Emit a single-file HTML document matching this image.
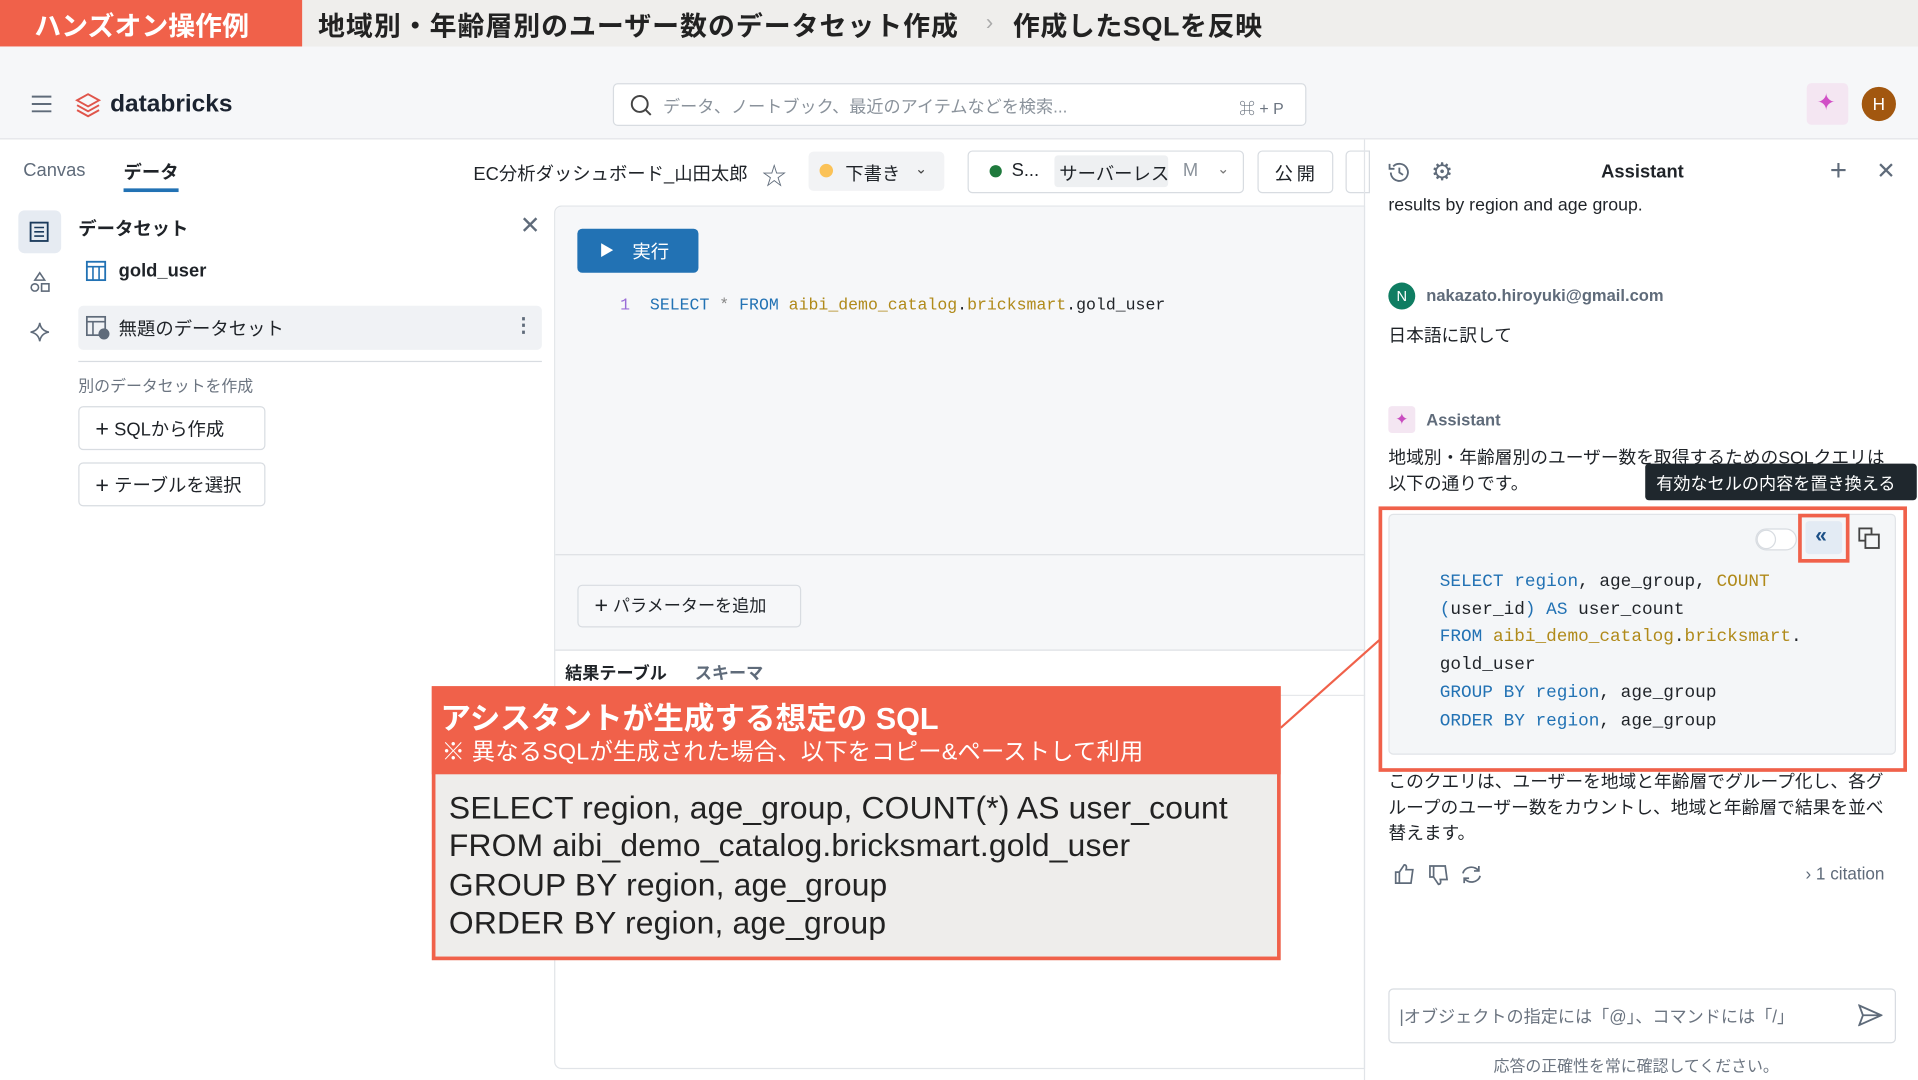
<!DOCTYPE html>
<html><head><meta charset="utf-8">
<style>
*{box-sizing:border-box;margin:0;padding:0}
html,body{width:1918px;height:1080px;overflow:hidden;background:#fff}
#w{position:absolute;left:0;top:0;width:1568px;height:883px;transform:scale(1.22321);transform-origin:0 0;font-family:"Liberation Sans","Noto Sans CJK JP",sans-serif;color:#1f2328;background:#fff}
.a{position:absolute;white-space:nowrap}
.mono{font-family:"Liberation Mono","DejaVu Sans Mono",monospace}
.kw{color:#2272b4}.ol{color:#b08a1a}
</style></head><body><div id="w">
<!-- banner -->
<div class="a" style="left:0;top:0;width:1568px;height:38px;background:#efeeec"></div>
<div class="a" style="left:0;top:0;width:247px;height:38px;background:#f0614a"></div>
<div class="a" style="left:28px;top:4px;font-size:22px;font-weight:bold;color:#fff">ハンズオン操作例</div>
<div class="a" style="left:260px;top:4px;font-size:22px;font-weight:bold;color:#222;letter-spacing:0.8px">地域別・年齢層別のユーザー数のデータセット作成</div>
<div class="a" style="left:806px;top:8px;font-size:18px;color:#aaa">›</div>
<div class="a" style="left:828px;top:4px;font-size:22px;font-weight:bold;color:#222;letter-spacing:0.5px">作成したSQLを反映</div>
<!-- header -->
<div class="a" style="left:0;top:38px;width:1568px;height:76px;background:#f6f7f9;border-bottom:1px solid #e3e5e8"></div>
<svg class="a" style="left:25px;top:78px" width="18" height="14"><path d="M1 1h16M1 7h16M1 13h16" stroke="#5f6b7a" stroke-width="1.6"/></svg>
<svg class="a" style="left:61px;top:75px" width="22" height="22" viewBox="0 0 22 22"><path d="M11 2l9 5-9 5-9-5z" fill="none" stroke="#e0554b" stroke-width="1.6"/><path d="M2 11l9 5 9-5M2 15l9 5 9-5" fill="none" stroke="#e0554b" stroke-width="1.6"/></svg>
<div class="a" style="left:90px;top:74px;font-size:20px;font-weight:bold;color:#1b2330">databricks</div>
<div class="a" style="left:501px;top:68px;width:567px;height:35px;background:#fff;border:1px solid #d8dce1;border-radius:4px"></div>
<svg class="a" style="left:515px;top:77px" width="18" height="18"><circle cx="8" cy="8" r="6.5" fill="none" stroke="#444" stroke-width="1.6"/><path d="M13 13l4 4" stroke="#444" stroke-width="1.6"/></svg>
<div class="a" style="left:542px;top:77px;font-size:14px;color:#8a929b">データ、ノートブック、最近のアイテムなどを検索...</div>
<div class="a" style="left:1013px;top:78px;font-size:13px;color:#6b7480">⌘ + P</div>
<div class="a" style="left:1477px;top:68px;width:34px;height:34px;border-radius:4px;background:#f4e6f2"></div>
<div class="a" style="left:1485px;top:73px;font-size:19px;color:#d14fc6">✦</div>
<div class="a" style="left:1522px;top:71px;width:28px;height:28px;border-radius:50%;background:#a2570f;color:#fff;font-size:14px;text-align:center;line-height:28px">H</div>
<!-- tabs row -->
<div class="a" style="left:19px;top:131px;font-size:15px;color:#5f6b7a">Canvas</div>
<div class="a" style="left:101px;top:130px;font-size:15px;font-weight:bold">データ</div>
<div class="a" style="left:101px;top:154px;width:45px;height:3px;background:#2272b4"></div>
<div class="a" style="left:387px;top:131px;font-size:15px">EC分析ダッシュボード_山田太郎</div>
<div class="a" style="left:623px;top:128px;font-size:20px;color:#5f6b7a">☆</div>
<div class="a" style="left:661px;top:124px;width:111px;height:32px;border-radius:4px;background:#f2f3f5"></div>
<div class="a" style="left:670px;top:134px;width:11px;height:11px;border-radius:50%;background:#fbc257"></div>
<div class="a" style="left:691px;top:131px;font-size:15px">下書き</div>
<div class="a" style="left:748px;top:131px;font-size:12px;color:#444">⌄</div>
<div class="a" style="left:791px;top:123px;width:226px;height:35px;border:1px solid #d8dce1;border-radius:4px"></div>
<div class="a" style="left:809px;top:135px;width:10px;height:10px;border-radius:50%;background:#1f7a3d"></div>
<div class="a" style="left:827px;top:131px;font-size:15px">S...</div>
<div class="a" style="left:862px;top:127px;width:93px;height:26px;border-radius:3px;background:#eef0f2"></div>
<div class="a" style="left:866px;top:131px;font-size:15px">サーバーレス</div>
<div class="a" style="left:967px;top:131px;font-size:15px;color:#8a929b">M</div>
<div class="a" style="left:995px;top:131px;font-size:12px;color:#777">⌄</div>
<div class="a" style="left:1028px;top:123px;width:62px;height:35px;border:1px solid #d8dce1;border-radius:4px"></div>
<div class="a" style="left:1042px;top:131px;font-size:15px;letter-spacing:3px">公開</div>
<div class="a" style="left:1100px;top:123px;width:20px;height:35px;border:1px solid #d8dce1;border-radius:4px 0 0 4px"></div>
<!-- left rail -->
<div class="a" style="left:15px;top:172px;width:35px;height:35px;border-radius:5px;background:#e6ebf2"></div>
<svg class="a" style="left:24px;top:181px" width="16" height="17"><rect x="1" y="1" width="14" height="15" fill="none" stroke="#1b3a5c" stroke-width="1.5"/><path d="M4 5h8M4 8.5h8M4 12h8" stroke="#1b3a5c" stroke-width="1.3"/></svg>
<svg class="a" style="left:24px;top:222px" width="17" height="18"><path d="M8.5 1l4 6h-8z" fill="none" stroke="#5f6b7a" stroke-width="1.3"/><circle cx="4.5" cy="13" r="3" fill="none" stroke="#5f6b7a" stroke-width="1.3"/><rect x="10" y="10" width="6" height="6" fill="none" stroke="#5f6b7a" stroke-width="1.3"/></svg>
<svg class="a" style="left:24px;top:263px" width="17" height="17"><path d="M8.5 1Q9.5 7.5 16 8.5Q9.5 9.5 8.5 16Q7.5 9.5 1 8.5Q7.5 7.5 8.5 1z" fill="none" stroke="#5f6b7a" stroke-width="1.3"/></svg>
<!-- datasets panel -->
<div class="a" style="left:64px;top:176px;font-size:15px;font-weight:bold">データセット</div>
<div class="a" style="left:425px;top:172px;font-size:20px;color:#5f6b7a">✕</div>
<svg class="a" style="left:70px;top:213px" width="17" height="17"><rect x="1" y="1" width="15" height="15" fill="none" stroke="#2272b4" stroke-width="1.5"/><path d="M1 5h15M6 5v11M11 5v11" stroke="#2272b4" stroke-width="1.3"/></svg>
<div class="a" style="left:97px;top:213px;font-size:15px;font-weight:bold">gold_user</div>
<div class="a" style="left:64px;top:250px;width:379px;height:36px;border-radius:4px;background:#f0f2f5"></div>
<svg class="a" style="left:70px;top:258px" width="20" height="20"><rect x="1" y="1" width="15" height="15" fill="none" stroke="#5f6b7a" stroke-width="1.4"/><path d="M1 5h15M6 5v11" stroke="#5f6b7a" stroke-width="1.3"/><circle cx="15" cy="15" r="4.5" fill="#5f6b7a"/></svg>
<div class="a" style="left:97px;top:258px;font-size:15px">無題のデータセット</div>
<div class="a" style="left:420px;top:256px;font-size:16px;color:#5f6b7a;font-weight:bold">⋮</div>
<div class="a" style="left:64px;top:295px;width:379px;height:1px;background:#d8dce1"></div>
<div class="a" style="left:64px;top:305px;font-size:13px;color:#6b7480">別のデータセットを作成</div>
<div class="a" style="left:64px;top:332px;width:153px;height:36px;border:1px solid #d8dce1;border-radius:4px"></div>
<div class="a" style="left:78px;top:340px;font-size:15px"><span style="font-size:19px;font-weight:300;vertical-align:-1px">+</span> SQLから作成</div>
<div class="a" style="left:64px;top:378px;width:153px;height:36px;border:1px solid #d8dce1;border-radius:4px"></div>
<div class="a" style="left:78px;top:386px;font-size:15px"><span style="font-size:19px;font-weight:300;vertical-align:-1px">+</span> テーブルを選択</div>
<!-- editor -->
<div class="a" style="left:453px;top:168px;width:663px;height:706px;border:1px solid #e1e4e8;border-radius:6px 0 0 6px;background:#fff"></div>
<div class="a" style="left:454px;top:169px;width:662px;height:362px;background:#f6f7f9;border-radius:6px 0 0 0"></div>
<div class="a" style="left:454px;top:453px;width:662px;height:1px;background:#dde0e4"></div>
<div class="a" style="left:454px;top:531px;width:662px;height:1px;background:#dde0e4"></div>
<div class="a" style="left:454px;top:568px;width:662px;height:1px;background:#e6e8eb"></div>
<div class="a" style="left:472px;top:187px;width:99px;height:36px;border-radius:4px;background:#2272b4"></div>
<div class="a" style="left:490px;top:196px;font-size:12px;color:#fff">▶</div>
<div class="a" style="left:517px;top:195px;font-size:15px;color:#fff">実行</div>
<div class="a mono" style="left:507px;top:243px;font-size:13.5px"><span style="color:#9a6dd7">1</span>&nbsp;&nbsp;<span class="kw">SELECT</span> <span style="color:#888">*</span> <span class="kw">FROM</span> <span class="ol">aibi_demo_catalog</span>.<span class="ol">bricksmart</span>.gold_user</div>
<div class="a" style="left:472px;top:478px;width:183px;height:35px;border:1px solid #d8dce1;border-radius:4px;background:#f6f7f9"></div>
<div class="a" style="left:486px;top:485px;font-size:14px"><span style="font-size:19px;font-weight:300;vertical-align:-1px">+</span> パラメーターを追加</div>
<div class="a" style="left:462px;top:540px;font-size:14px;font-weight:bold">結果テーブル</div>
<div class="a" style="left:568px;top:540px;font-size:14px;font-weight:bold;color:#5f6b7a">スキーマ</div>
<!-- right panel -->
<div class="a" style="left:1115px;top:114px;width:1px;height:769px;background:#e1e4e8"></div>
<svg class="a" style="left:1134px;top:131px" width="20" height="20"><path d="M3 10a7 7 0 1 0 2-5" fill="none" stroke="#5f6b7a" stroke-width="1.5"/><path d="M2 3v4h4" fill="none" stroke="#5f6b7a" stroke-width="1.5"/><path d="M10 6v4l3 2" fill="none" stroke="#5f6b7a" stroke-width="1.5"/></svg>
<div class="a" style="left:1170px;top:128px;font-size:20px;color:#5f6b7a">⚙</div>
<div class="a" style="left:1309px;top:132px;font-size:15px;font-weight:bold">Assistant</div>
<div class="a" style="left:1496px;top:126px;font-size:24px;font-weight:300;color:#5f6b7a">+</div>
<div class="a" style="left:1534px;top:129px;font-size:19px;color:#5f6b7a">✕</div>
<div style="position:absolute;left:1116px;top:162px;width:452px;height:26px;overflow:hidden"><div class="a" style="left:19px;top:-2px;font-size:14.5px">results by region and age group.</div></div>
<div class="a" style="left:1135px;top:231px;width:22px;height:22px;border-radius:50%;background:#0f7d62;color:#fff;font-size:12px;text-align:center;line-height:22px">N</div>
<div class="a" style="left:1166px;top:234px;font-size:13.5px;font-weight:bold;color:#5f6b7a">nakazato.hiroyuki@gmail.com</div>
<div class="a" style="left:1135px;top:263px;font-size:14.5px">日本語に訳して</div>
<div class="a" style="left:1135px;top:332px;width:22px;height:22px;border-radius:3px;background:#f4e6f2;color:#c94dc0;font-size:13px;text-align:center;line-height:22px">✦</div>
<div class="a" style="left:1166px;top:336px;font-size:13.5px;font-weight:bold;color:#5f6b7a">Assistant</div>
<div class="a" style="left:1135px;top:365px;font-size:14.5px;line-height:21px">地域別・年齢層別のユーザー数を取得するためのSQLクエリは<br>以下の通りです。</div>
<div class="a" style="left:1345px;top:379px;width:222px;height:30px;border-radius:3px;background:#1f272d"></div>
<div class="a" style="left:1354px;top:385px;font-size:14px;color:#fff">有効なセルの内容を置き換える</div>
<div class="a" style="left:1127px;top:414px;width:432px;height:217px;border:3px solid #f0614a"></div>
<div class="a" style="left:1135px;top:420px;width:415px;height:197px;border:1px solid #e1e4e8;border-radius:4px;background:#f4f6f8"></div>
<div class="a" style="left:1435px;top:432px;width:34px;height:18px;border:1px solid #d8dce1;border-radius:9px;background:#fff"></div>
<div class="a" style="left:1436px;top:433px;width:16px;height:16px;border-radius:50%;border:1px solid #d8dce1;background:#fff"></div>
<div class="a" style="left:1470px;top:420px;width:42px;height:40px;border:3px solid #f0614a"></div>
<div class="a" style="left:1476px;top:426px;width:30px;height:27px;border-radius:3px;background:#e3ebf4"></div>
<div class="a" style="left:1484px;top:428px;font-size:17px;font-weight:bold;color:#1b4f86">«</div>
<svg class="a" style="left:1519px;top:431px" width="18" height="18"><rect x="1" y="1" width="10" height="10" fill="none" stroke="#444" stroke-width="1.5"/><rect x="6" y="6" width="11" height="11" fill="#f4f6f8" stroke="#444" stroke-width="1.5"/></svg>
<div class="a mono" style="left:1177px;top:465px;font-size:14.5px;line-height:22.7px"><span class="kw">SELECT region</span>, age_group, <span class="ol">COUNT</span><br><span class="kw">(</span>user_id<span class="kw">) AS</span> user_count<br><span class="kw">FROM</span> <span class="ol">aibi_demo_catalog</span>.<span class="ol">bricksmart</span>.<br>gold_user<br><span class="kw">GROUP BY region</span>, age_group<br><span class="kw">ORDER BY region</span>, age_group</div>
<div class="a" style="left:1135px;top:630px;font-size:14.5px;line-height:21px">このクエリは、ユーザーを地域と年齢層でグループ化し、各グ<br>ループのユーザー数をカウントし、地域と年齢層で結果を並べ<br>替えます。</div>
<svg class="a" style="left:1139px;top:705px" width="80" height="20"><path d="M2 8h3v9H2zM5 8l4-6c2 0 2 2 1.5 4H16l-1.5 11H5" fill="none" stroke="#5f6b7a" stroke-width="1.4"/><path d="M30 12h3V3h-3zM33 12l4 6c2 0 2-2 1.5-4H44L42.5 3H33" fill="none" stroke="#5f6b7a" stroke-width="1.4"/><path d="M57 9a7 6 0 0 1 13-2M71 11a7 6 0 0 1-13 2" fill="none" stroke="#5f6b7a" stroke-width="1.4"/><path d="M70 3v4h-4M58 17v-4h4" fill="none" stroke="#5f6b7a" stroke-width="1.4"/></svg>
<div class="a" style="left:1476px;top:706px;font-size:14px;color:#5f6b7a">› 1 citation</div>
<div class="a" style="left:1135px;top:808px;width:415px;height:45px;border:1px solid #d8dce1;border-radius:4px;background:#fff"></div>
<div class="a" style="left:1144px;top:821px;font-size:14px;color:#6b7480">|オブジェクトの指定には「@」、コマンドには「/」</div>
<svg class="a" style="left:1519px;top:821px" width="20" height="18"><path d="M1 1l18 8-18 8 3-8z M4 9h15" fill="none" stroke="#5f6b7a" stroke-width="1.5"/></svg>
<div class="a" style="left:1221px;top:861px;font-size:13px;color:#6b7480">応答の正確性を常に確認してください。</div>
<!-- callout -->
<svg class="a" style="left:1040px;top:515px" width="95" height="90"><path d="M7 80L88 8" stroke="#f0614a" stroke-width="1.8"/></svg>
<div class="a" style="left:353px;top:561px;width:694px;height:224px;background:#eeedeb;border:3px solid #f0614a"></div>
<div class="a" style="left:353px;top:561px;width:694px;height:72px;background:#f0614a"></div>
<div class="a" style="left:360px;top:568px;font-size:25px;font-weight:bold;color:#fff">アシスタントが生成する想定の SQL</div>
<div class="a" style="left:361px;top:600px;font-size:19px;color:#fff;letter-spacing:0.2px">※ 異なるSQLが生成された場合、以下をコピー&amp;ペーストして利用</div>
<div class="a" style="left:367px;top:645px;font-size:26px;line-height:31.3px;color:#222;letter-spacing:0.15px">SELECT region, age_group, COUNT(*) AS user_count<br>FROM aibi_demo_catalog.bricksmart.gold_user<br>GROUP BY region, age_group<br>ORDER BY region, age_group</div>
</div></body></html>
